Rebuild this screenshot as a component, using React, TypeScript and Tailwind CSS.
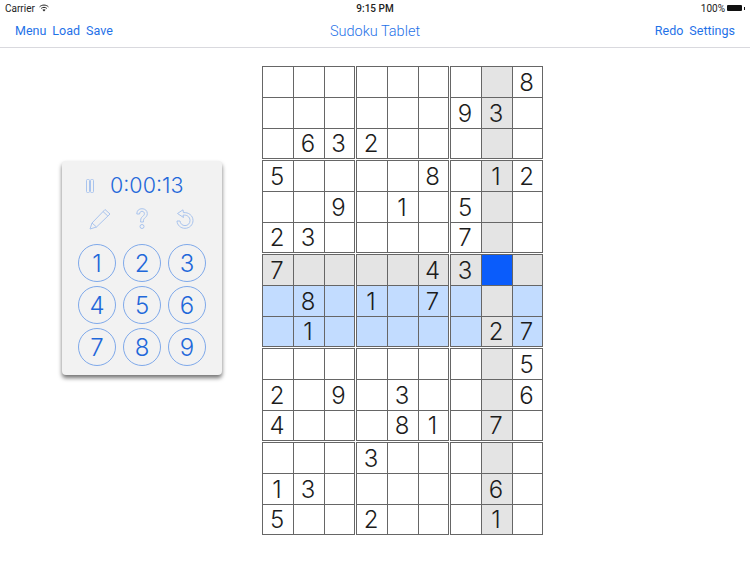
const rows = [
  "........8",
  "......93.",
  ".632.....",
  "5....8.12",
  "..9.1.5..",
  "23....7..",
  "7....43..",
  ".8.1.7...",
  ".1.....27",
  "........5",
  "2.9.3...6",
  "4...81.7.",
  "...3.....",
  "13.....6.",
  "5..2...1.",
];

function cellBg(r: number, c: number) {
  if (r === 6 && c === 7) return "bg-[#0a5cfb]";
  if (r === 6 || c === 7) return "bg-[#e4e4e4]";
  if (r === 7 || r === 8) return "bg-[#c2dcff]";
  return "bg-white";
}

function Box({ top, left }: { top: number; left: number }) {
  const cells = [];
  for (let r = top; r < top + 3; r++) {
    for (let c = left; c < left + 3; c++) {
      const ch = rows[r][c];
      cells.push(
        <div key={`${r}-${c}`} className={`flex items-center justify-center pr-[2px] pt-px font-['Inter',sans-serif] text-[24px] font-light leading-none text-[#1c1c1c] ${cellBg(r, c)}`}>
          {ch === "." ? "" : ch}
        </div>
      );
    }
  }
  return (
    <div className="grid h-[93px] w-[93px] grid-cols-[30px_30px_29px] grid-rows-[30px_30px_29px] gap-px border border-[#666] bg-[#666]">
      {cells}
    </div>
  );
}

function Board() {
  const boxes = [];
  for (let r = 0; r < 15; r += 3) {
    for (let c = 0; c < 9; c += 3) {
      boxes.push(<Box key={`${r}-${c}`} top={r} left={c} />);
    }
  }
  return <div className="grid w-[281px] grid-cols-[93px_93px_93px] gap-px">{boxes}</div>;
}

function Panel() {
  return (
    <div className="mt-[113px] h-[214px] w-[160px] rounded-[4px] bg-[#f2f2f2] pt-[12px] shadow-[0_3px_4px_0_rgba(0,0,0,0.55)]">
      <div className="flex h-[26px] items-center pl-[23px]">
        <svg width="10" height="14" viewBox="0 0 10 14" fill="none" stroke="#a9c4ee" strokeWidth="1">
          <rect x="1.5" y="0.5" width="3" height="13" rx="1" />
          <rect x="5.5" y="0.5" width="3" height="13" rx="1" />
        </svg>
        <span className="ml-[15px] font-['Inter',sans-serif] text-[21.5px] font-light leading-none text-[#1f68da]">0:00:13</span>
      </div>
      <div className="mt-[8px] flex h-[24px] items-center pl-[27px]">
        <svg width="22" height="22" viewBox="0 0 22 22" fill="none" stroke="#a9c4ee" strokeWidth="1" strokeLinejoin="round">
          <path d="M1 21 L3 15 L16 1.5 L21 6 L7.5 19 Z" />
          <path d="M3 15 L7.5 19 M14 3.5 L18.8 8" />
        </svg>
        <svg className="ml-[25px]" width="12" height="22" viewBox="0 0 12 22" fill="none" stroke="#a9c4ee" strokeWidth="1" strokeLinejoin="round">
          <path d="M0.8 6 C0.8 2.5 3 0.7 6 0.7 C9.2 0.7 11.3 2.8 11.3 5.6 C11.3 8 10 9 8.6 10.2 C7.6 11 7.4 12 7.4 14 L4.6 14 C4.6 11.5 4.8 10 6.4 8.6 C7.6 7.6 8.4 7 8.4 5.7 C8.4 4.3 7.4 3.3 6 3.3 C4.5 3.3 3.6 4.4 3.6 6 Z" />
          <circle cx="6" cy="18.5" r="2" />
        </svg>
        <svg className="ml-[28px]" width="18" height="20" viewBox="0 0 18 20" fill="none" stroke="#a9c4ee" strokeWidth="1" strokeLinejoin="round">
          <path d="M7 0.8 L1.5 4.5 L7.5 8.5 L7 6.2 C10.5 5.6 14 7.6 14 11.5 C14 14.6 11.8 16.6 9 16.6 C6.2 16.6 4.2 14.6 4 12 L1 12 C1.2 16.2 4.6 19.3 9 19.3 C13.6 19.3 17 15.8 17 11.5 C17 6.5 12.6 3.2 7.4 3.6 Z" />
        </svg>
      </div>
      <div className="mt-[13px] grid grid-cols-[38px_38px_38px] justify-center gap-x-[7px] gap-y-[4px]">
        {[1, 2, 3, 4, 5, 6, 7, 8, 9].map((n) => (
          <div key={n} className="flex h-[38px] w-[38px] items-center justify-center rounded-full border border-[#7fa9ea] pt-px font-['Inter',sans-serif] text-[24px] font-light leading-none text-[#1f68da]">
            {n}
          </div>
        ))}
      </div>
    </div>
  );
}

export default function App() {
  return (
    <div className="h-[563px] w-[750px] overflow-hidden bg-white font-['Roboto',sans-serif]">
      <div className="flex h-[16px] items-center justify-between px-[5px] text-[10px] text-[#222]">
        <div className="flex w-[200px] items-center gap-[4px]">
          <span>Carrier</span>
          <svg width="10" height="8" viewBox="0 0 10 8" fill="none" stroke="#222" strokeWidth="1">
            <path d="M0.6 2.8 C3 0.5 7 0.5 9.4 2.8" />
            <path d="M2.2 4.4 C3.8 3 6.2 3 7.8 4.4" />
            <path d="M5 7.6 L3.4 5.8 C4.4 5 5.6 5 6.6 5.8 Z" fill="#222" stroke="none" />
          </svg>
        </div>
        <span className="font-medium">9:15 PM</span>
        <div className="flex w-[200px] items-center justify-end gap-[2px]">
          <span>100%</span>
          <span className="h-[6px] w-[15px] rounded-[1px] bg-[#111]" />
          <span className="h-[3px] w-px bg-[#111]" />
        </div>
      </div>
      <div className="flex h-[32px] items-center justify-between border-b border-[#d9d9de] px-[15px] text-[12.5px] text-[#1f72e8]">
        <div className="flex w-[200px] gap-[6px]">
          <span>Menu</span>
          <span>Load</span>
          <span>Save</span>
        </div>
        <span className="text-[14.5px] font-light">Sudoku Tablet</span>
        <div className="flex w-[200px] justify-end gap-[6px]">
          <span>Redo</span>
          <span>Settings</span>
        </div>
      </div>
      <div className="flex pl-[62px]">
        <Panel />
        <div className="ml-[40px] pt-[18px]">
          <Board />
        </div>
      </div>
    </div>
  );
}
